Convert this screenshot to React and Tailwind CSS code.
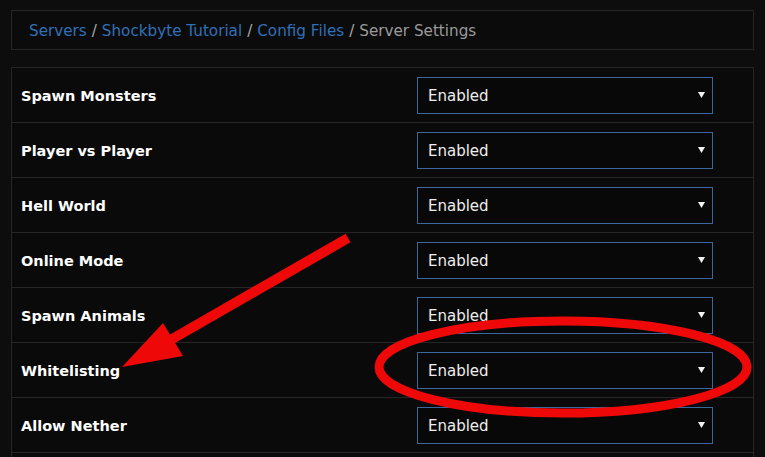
import React from "react";

const rows = [
  "Spawn Monsters",
  "Player vs Player",
  "Hell World",
  "Online Mode",
  "Spawn Animals",
  "Whitelisting",
  "Allow Nether",
];

function Select() {
  return (
    <div className="w-[296px] h-[37px] border border-[#3d679b] flex items-center justify-between pl-[10px] pr-[7px] bg-[#080808]">
      <span className="text-[15px] text-[#eeeeee] pt-[3px]">Enabled</span>
      <svg width="7" height="7" viewBox="0 0 7 7" className="mt-[-1px]">
        <polygon points="0,1 7,1 3.5,7" fill="#f2f2f2" />
      </svg>
    </div>
  );
}

export default function App() {
  return (
    <div
      className="relative w-[765px] h-[457px] overflow-hidden bg-[#0d0d0d] pt-[10px] px-[11px]"
      style={{ fontFamily: '"DejaVu Sans", "Noto Sans", sans-serif' }}
    >
      <div className="h-[40px] border border-[#262626] bg-[#0b0b0b] flex items-center pl-[17px] pt-[2px] text-[15.2px]">
        <span className="text-[#3170b8]">Servers</span>
        <span className="text-[#a8a8a8] px-[5px]">/</span>
        <span className="text-[#3170b8]">Shockbyte Tutorial</span>
        <span className="text-[#a8a8a8] px-[5px]">/</span>
        <span className="text-[#3170b8]">Config Files</span>
        <span className="text-[#a8a8a8] px-[5px]">/</span>
        <span className="text-[#9a9a9a]">Server Settings</span>
      </div>
      <div className="mt-[17px] border border-[#262626] bg-[#0a0a0a]">
        {rows.map((r) => (
          <div key={r} className="h-[55px] border-b border-[#262626] flex items-center">
            <div className="w-[405px] pl-[9px] pt-[3px] text-[14.5px] font-bold text-white">{r}</div>
            <Select />
          </div>
        ))}
        <div className="h-[20px]" />
      </div>
      <svg
        className="absolute inset-0 pointer-events-none"
        width="765"
        height="457"
        viewBox="0 0 765 457"
      >
        <line x1="348" y1="238" x2="160" y2="346" stroke="#ee0808" strokeWidth="10" />
        <polygon points="122,367 163,323 183,356" fill="#ee0808" />
        <ellipse cx="563" cy="367" rx="184" ry="46" fill="none" stroke="#ee0808" strokeWidth="9" />
      </svg>
    </div>
  );
}
